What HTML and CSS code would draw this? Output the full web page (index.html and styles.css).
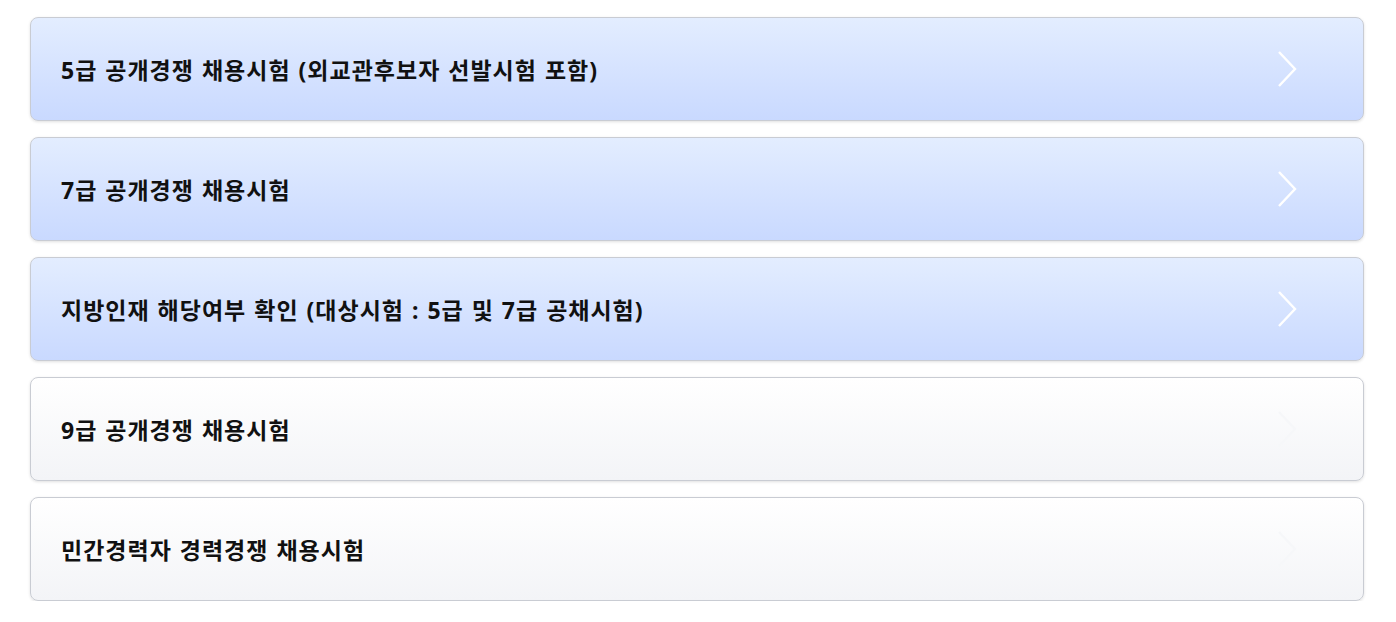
FILE: index.html
```html
<!DOCTYPE html>
<html lang="ko">
<head>
    <meta charset="UTF-8">
    <meta name="viewport" content="width=device-width, initial-scale=1.0">
    <title>채용시험</title>
    <link rel="stylesheet" href="styles.css">
</head>
<body>
    <div class="exam-list">
        <a class="exam-item active" href="#">
            <span class="exam-title">5급 공개경쟁 채용시험 (외교관후보자 선발시험 포함)</span>
            <svg class="arrow" width="20" height="36" viewBox="0 0 20 36"><path d="M2 1 L18 18 L2 35" fill="none" stroke="currentColor" stroke-width="2.4"/></svg>
        </a>
        <a class="exam-item active" href="#">
            <span class="exam-title">7급 공개경쟁 채용시험</span>
            <svg class="arrow" width="20" height="36" viewBox="0 0 20 36"><path d="M2 1 L18 18 L2 35" fill="none" stroke="currentColor" stroke-width="2.4"/></svg>
        </a>
        <a class="exam-item active" href="#">
            <span class="exam-title">지방인재 해당여부 확인 (대상시험 : 5급 및 7급 공채시험)</span>
            <svg class="arrow" width="20" height="36" viewBox="0 0 20 36"><path d="M2 1 L18 18 L2 35" fill="none" stroke="currentColor" stroke-width="2.4"/></svg>
        </a>
        <a class="exam-item" href="#">
            <span class="exam-title">9급 공개경쟁 채용시험</span>
            <svg class="arrow" width="20" height="36" viewBox="0 0 20 36"><path d="M2 1 L18 18 L2 35" fill="none" stroke="currentColor" stroke-width="2.4"/></svg>
        </a>
        <a class="exam-item" href="#">
            <span class="exam-title">민간경력자 경력경쟁 채용시험</span>
            <svg class="arrow" width="20" height="36" viewBox="0 0 20 36"><path d="M2 1 L18 18 L2 35" fill="none" stroke="currentColor" stroke-width="2.4"/></svg>
        </a>
    </div>
</body>
</html>
```

FILE: styles.css
```css
body {
    margin: 0;
    padding: 17px 32px 0 30px;
    background: #fff;
    font-family: "Noto Sans", "Noto Sans CJK KR", sans-serif;
}

.exam-list {
    display: flex;
    flex-direction: column;
    gap: 16px;
}

.exam-item {
    display: flex;
    align-items: center;
    justify-content: space-between;
    height: 102px;
    padding: 0 66px 0 30px;
    border: 1px solid #c9ccd3;
    border-radius: 8px;
    background: linear-gradient(#ffffff, #f3f4f7);
    box-shadow: 0 1px 3px rgba(0, 0, 0, 0.12);
    color: #f6f7f9;
    text-decoration: none;
}

.exam-item.active {
    background: linear-gradient(#e3edff, #c9d9ff);
    color: #fff;
}

.exam-title {
    color: #111;
    font-size: 23px;
    font-weight: bold;
    letter-spacing: 1px;
    word-spacing: 1px;
}

.arrow {
    display: block;
}
```
